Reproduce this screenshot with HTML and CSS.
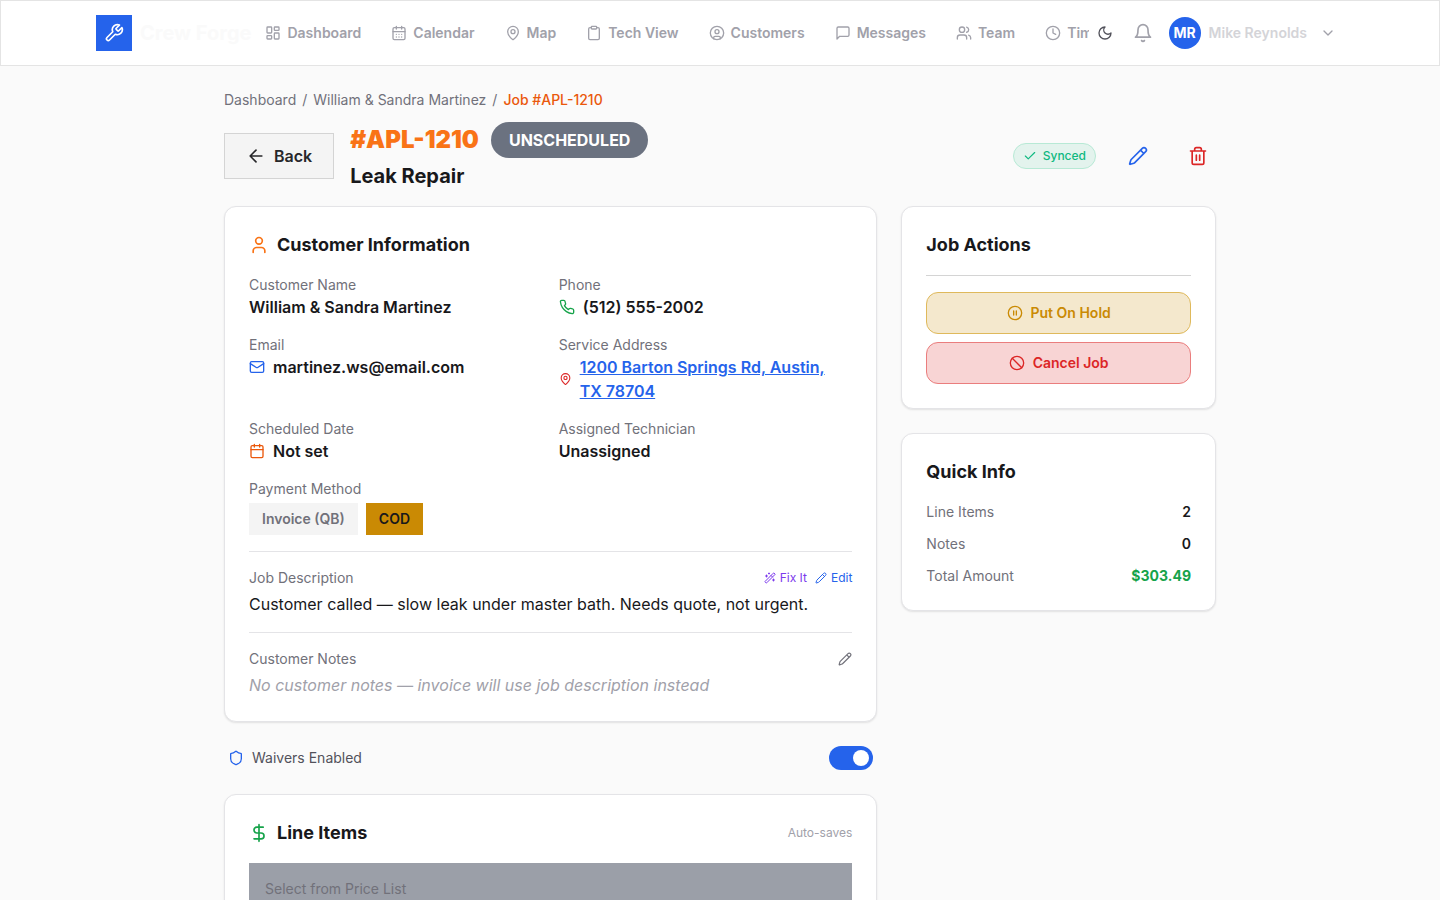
FILE: index.html
```html
<!DOCTYPE html>
<html lang="en">
<head>
  <meta charset="UTF-8" />
  <meta name="viewport" content="width=device-width, initial-scale=1.0" />
  <title>Job #APL-1210 - Crew Forge</title>
  <link rel="stylesheet" href="styles.css">
</head>
<body>
  <header class="topbar">
    <div class="topbar-inner">
      <a class="brand" href="#">
        <span class="brand-logo">
          <svg class="icon icon-md" viewBox="0 0 24 24"><path d="M14.7 6.3a1 1 0 0 0 0 1.4l1.6 1.6a1 1 0 0 0 1.4 0l3.77-3.77a6 6 0 0 1-7.94 7.94l-6.91 6.91a2.12 2.12 0 0 1-3-3l6.91-6.91a6 6 0 0 1 7.94-7.94l-3.76 3.76z"/></svg>
        </span>
        <span class="brand-name">Crew Forge</span>
      </a>
      <nav class="nav">
        <a href="#"><svg class="icon" viewBox="0 0 24 24"><rect x="3" y="3" width="7" height="9" rx="1"/><rect x="14" y="3" width="7" height="5" rx="1"/><rect x="14" y="12" width="7" height="9" rx="1"/><rect x="3" y="16" width="7" height="5" rx="1"/></svg>Dashboard</a>
        <a href="#"><svg class="icon" viewBox="0 0 24 24"><path d="M8 2v4M16 2v4M3 10h18"/><rect x="3" y="4" width="18" height="18" rx="2"/><path d="M8 14h.01M12 14h.01M16 14h.01M8 18h.01M12 18h.01M16 18h.01"/></svg>Calendar</a>
        <a href="#"><svg class="icon" viewBox="0 0 24 24"><path d="M20 10c0 4.993-5.539 10.193-7.399 11.799a1 1 0 0 1-1.202 0C9.539 20.193 4 14.993 4 10a8 8 0 0 1 16 0"/><circle cx="12" cy="10" r="3"/></svg>Map</a>
        <a href="#"><svg class="icon" viewBox="0 0 24 24"><rect x="8" y="2" width="8" height="4" rx="1"/><path d="M16 4h2a2 2 0 0 1 2 2v14a2 2 0 0 1-2 2H6a2 2 0 0 1-2-2V6a2 2 0 0 1 2-2h2"/></svg>Tech View</a>
        <a href="#"><svg class="icon" viewBox="0 0 24 24"><circle cx="12" cy="12" r="10"/><circle cx="12" cy="10" r="3"/><path d="M7 20.662V19a2 2 0 0 1 2-2h6a2 2 0 0 1 2 2v1.662"/></svg>Customers</a>
        <a href="#"><svg class="icon" viewBox="0 0 24 24"><path d="M21 15a2 2 0 0 1-2 2H7l-4 4V5a2 2 0 0 1 2-2h14a2 2 0 0 1 2 2z"/></svg>Messages</a>
        <a href="#"><svg class="icon" viewBox="0 0 24 24"><path d="M16 21v-2a4 4 0 0 0-4-4H6a4 4 0 0 0-4 4v2"/><circle cx="9" cy="7" r="4"/><path d="M22 21v-2a4 4 0 0 0-3-3.87M16 3.13a4 4 0 0 1 0 7.75"/></svg>Team</a>
        <a href="#"><svg class="icon" viewBox="0 0 24 24"><circle cx="12" cy="12" r="10"/><path d="M12 6v6l4 2"/></svg>Time</a>
      </nav>
      <div class="topbar-tools">
        <button class="theme-btn" aria-label="Toggle theme"><svg class="icon" viewBox="0 0 24 24"><path d="M12 3a6 6 0 0 0 9 9 9 9 0 1 1-9-9Z"/></svg></button>
        <button class="bell-btn" aria-label="Notifications"><svg class="icon icon-md" viewBox="0 0 24 24"><path d="M6 8a6 6 0 0 1 12 0c0 7 3 9 3 9H3s3-2 3-9"/><path d="M10.3 21a1.94 1.94 0 0 0 3.4 0"/></svg></button>
        <button class="user-btn">
          <span class="avatar">MR</span>
          <span>Mike Reynolds</span>
          <svg class="icon chevron" viewBox="0 0 24 24"><path d="m6 9 6 6 6-6"/></svg>
        </button>
      </div>
    </div>
  </header>

  <main class="container">
    <nav class="breadcrumb" aria-label="Breadcrumb">
      <a href="#">Dashboard</a>
      <span>/</span>
      <a href="#">William &amp; Sandra Martinez</a>
      <span>/</span>
      <span class="current">Job #APL-1210</span>
    </nav>

    <div class="job-header">
      <button class="back-btn"><svg class="icon icon-md" viewBox="0 0 24 24"><path d="m12 19-7-7 7-7M19 12H5"/></svg>Back</button>
      <div class="job-title">
        <div class="job-number">
          <h1>#APL-1210</h1>
          <span class="status">UNSCHEDULED</span>
        </div>
        <p>Leak Repair</p>
      </div>
      <div class="job-tools">
        <span class="synced"><svg class="icon icon-sm" viewBox="0 0 24 24"><path d="M20 6 9 17l-5-5"/></svg>Synced</span>
        <button class="icon-btn blue" aria-label="Edit job"><svg class="icon icon-md" viewBox="0 0 24 24"><path d="M21.174 6.812a1 1 0 0 0-3.986-3.987L3.842 16.174a2 2 0 0 0-.5.83l-1.321 4.352a.5.5 0 0 0 .623.622l4.353-1.32a2 2 0 0 0 .83-.497zM15 5l4 4"/></svg></button>
        <button class="icon-btn red" aria-label="Delete job"><svg class="icon icon-md" viewBox="0 0 24 24"><path d="M3 6h18M19 6v14c0 1-1 2-2 2H7c-1 0-2-1-2-2V6M8 6V4c0-1 1-2 2-2h4c1 0 2 1 2 2v2M10 11v6M14 11v6"/></svg></button>
      </div>
    </div>

    <div class="layout">
      <div class="column">
        <section class="card">
          <h2><svg class="icon icon-md orange" viewBox="0 0 24 24"><path d="M19 21v-2a4 4 0 0 0-4-4H9a4 4 0 0 0-4 4v2"/><circle cx="12" cy="7" r="4"/></svg>Customer Information</h2>

          <div class="info-grid">
            <div>
              <div class="label">Customer Name</div>
              <div class="value">William &amp; Sandra Martinez</div>
            </div>
            <div>
              <div class="label">Phone</div>
              <div class="value"><svg class="icon green" viewBox="0 0 24 24"><path d="M22 16.92v3a2 2 0 0 1-2.18 2 19.79 19.79 0 0 1-8.63-3.07 19.5 19.5 0 0 1-6-6 19.79 19.79 0 0 1-3.07-8.67A2 2 0 0 1 4.11 2h3a2 2 0 0 1 2 1.72 12.84 12.84 0 0 0 .7 2.81 2 2 0 0 1-.45 2.11L8.09 9.91a16 16 0 0 0 6 6l1.27-1.27a2 2 0 0 1 2.11-.45 12.84 12.84 0 0 0 2.81.7A2 2 0 0 1 22 16.92z"/></svg>(512) 555-2002</div>
            </div>
            <div>
              <div class="label">Email</div>
              <div class="value"><svg class="icon blue" viewBox="0 0 24 24"><rect x="2" y="4" width="20" height="16" rx="2"/><path d="m22 7-8.97 5.7a1.94 1.94 0 0 1-2.06 0L2 7"/></svg>martinez.ws@email.com</div>
            </div>
            <div>
              <div class="label">Service Address</div>
              <div class="value"><svg class="icon pin red" viewBox="0 0 24 24"><path d="M20 10c0 4.993-5.539 10.193-7.399 11.799a1 1 0 0 1-1.202 0C9.539 20.193 4 14.993 4 10a8 8 0 0 1 16 0"/><circle cx="12" cy="10" r="3"/></svg><a href="#">1200 Barton Springs Rd, Austin, TX 78704</a></div>
            </div>
            <div>
              <div class="label">Scheduled Date</div>
              <div class="value"><svg class="icon dark-orange" viewBox="0 0 24 24"><path d="M8 2v4M16 2v4M3 10h18"/><rect x="3" y="4" width="18" height="18" rx="2"/></svg>Not set</div>
            </div>
            <div>
              <div class="label">Assigned Technician</div>
              <div class="value">Unassigned</div>
            </div>
            <div>
              <div class="label">Payment Method</div>
              <div class="pay-options">
                <button>Invoice (QB)</button>
                <button class="active">COD</button>
              </div>
            </div>
          </div>

          <div class="block">
            <div class="block-head">
              <span class="label">Job Description</span>
              <div class="links">
                <button class="purple"><svg class="icon icon-xs" viewBox="0 0 24 24"><path d="m21.64 3.64-1.28-1.28a1.21 1.21 0 0 0-1.72 0L2.36 18.64a1.21 1.21 0 0 0 0 1.72l1.28 1.28a1.2 1.2 0 0 0 1.72 0L21.64 5.36a1.2 1.2 0 0 0 0-1.72M14 7l3 3M5 6v4M19 14v4M10 2v2M7 8H3M21 16h-4M11 3H9"/></svg>Fix It</button>
                <button class="blue"><svg class="icon icon-xs" viewBox="0 0 24 24"><path d="M21.174 6.812a1 1 0 0 0-3.986-3.987L3.842 16.174a2 2 0 0 0-.5.83l-1.321 4.352a.5.5 0 0 0 .623.622l4.353-1.32a2 2 0 0 0 .83-.497zM15 5l4 4"/></svg>Edit</button>
              </div>
            </div>
            <p>Customer called — slow leak under master bath. Needs quote, not urgent.</p>
          </div>

          <div class="block">
            <div class="block-head">
              <span class="label">Customer Notes</span>
              <div class="links">
                <button class="gray" aria-label="Edit customer notes"><svg class="icon icon-sm" viewBox="0 0 24 24"><path d="M21.174 6.812a1 1 0 0 0-3.986-3.987L3.842 16.174a2 2 0 0 0-.5.83l-1.321 4.352a.5.5 0 0 0 .623.622l4.353-1.32a2 2 0 0 0 .83-.497zM15 5l4 4"/></svg></button>
              </div>
            </div>
            <p class="empty">No customer notes — invoice will use job description instead</p>
          </div>
        </section>

        <div class="waivers">
          <svg class="icon blue" viewBox="0 0 24 24"><path d="M20 13c0 5-3.5 7.5-7.66 8.95a1 1 0 0 1-.67-.01C7.5 20.5 4 18 4 13V6a1 1 0 0 1 1-1c2 0 4.5-1.2 6.24-2.72a1.17 1.17 0 0 1 1.52 0C14.51 3.81 17 5 19 5a1 1 0 0 1 1 1z"/></svg>
          <label for="waivers">Waivers Enabled</label>
          <input type="checkbox" id="waivers" class="switch" checked>
        </div>

        <section class="card">
          <div class="card-head">
            <h2><svg class="icon icon-md green" viewBox="0 0 24 24"><path d="M12 2v20M17 5H9.5a3.5 3.5 0 0 0 0 7h5a3.5 3.5 0 0 1 0 7H6"/></svg>Line Items</h2>
            <span class="hint">Auto-saves</span>
          </div>
          <div class="price-list">
            <label class="label" for="priceList">Select from Price List</label>
            <select id="priceList"></select>
          </div>
        </section>
      </div>

      <aside class="column">
        <section class="card">
          <h2>Job Actions</h2>
          <div class="actions">
            <button class="hold"><svg class="icon" viewBox="0 0 24 24"><circle cx="12" cy="12" r="10"/><path d="M10 15V9M14 15V9"/></svg>Put On Hold</button>
            <button class="cancel"><svg class="icon" viewBox="0 0 24 24"><circle cx="12" cy="12" r="10"/><path d="m4.9 4.9 14.2 14.2"/></svg>Cancel Job</button>
          </div>
        </section>

        <section class="card">
          <h2>Quick Info</h2>
          <dl class="quick-info">
            <div><dt>Line Items</dt><dd>2</dd></div>
            <div><dt>Notes</dt><dd>0</dd></div>
            <div><dt>Total Amount</dt><dd class="total">$303.49</dd></div>
          </dl>
        </section>
      </aside>
    </div>
  </main>
</body>
</html>
```
FILE: styles.css
```css
* {
  box-sizing: border-box;
}
body {
  margin: 0;
  font-family: Inter, "Liberation Sans", sans-serif;
  font-size: 16px;
  line-height: 24px;
  color: #18181b;
  background: #fafafa;
}
h1, h2, p, dl, dd {
  margin: 0;
}
a {
  color: inherit;
  text-decoration: none;
}
button {
  font: inherit;
  color: inherit;
  background: none;
  border: none;
  padding: 0;
  cursor: pointer;
}

/* icons */
.icon {
  width: 16px;
  height: 16px;
  flex-shrink: 0;
  fill: none;
  stroke: currentColor;
  stroke-width: 2;
  stroke-linecap: round;
  stroke-linejoin: round;
}
.icon-md {
  width: 20px;
  height: 20px;
}
.icon-sm {
  width: 14px;
  height: 14px;
}
.icon-xs {
  width: 12px;
  height: 12px;
}
.blue { color: #2563eb; }
.red { color: #dc2626; }
.green { color: #16a34a; }
.orange { color: #f97316; }
.dark-orange { color: #ea580c; }
.purple { color: #7c3aed; }
.gray { color: #71717a; }

/* top bar */
.topbar {
  background: #fff;
  border: 1px solid #e4e4e4;
}
.topbar-inner {
  display: flex;
  align-items: center;
  height: 64px;
  max-width: 1280px;
  margin: 0 auto;
  padding: 0 16px;
}
.brand {
  display: flex;
  align-items: center;
  gap: 8px;
  margin-right: 14px;
  font-size: 20px;
  font-weight: 700;
  color: #fafafa;
  white-space: nowrap;
}
.brand-logo {
  display: flex;
  align-items: center;
  justify-content: center;
  width: 36px;
  height: 36px;
  color: #fff;
  background: #2563eb;
}
.nav {
  display: flex;
  flex: 1;
  gap: 30px;
  min-width: 0;
  overflow: hidden;
}
.nav a {
  display: flex;
  align-items: center;
  gap: 6px;
  font-size: 14px;
  font-weight: 600;
  line-height: 20px;
  color: #a1a1aa;
  white-space: nowrap;
}
.topbar-tools {
  display: flex;
  align-items: center;
}
.theme-btn,
.bell-btn {
  display: flex;
  align-items: center;
  justify-content: center;
  height: 36px;
}
.theme-btn {
  width: 32px;
  margin-right: 4px;
  color: #52525b;
}
.bell-btn {
  width: 36px;
  color: #a1a1aa;
}
.user-btn {
  display: flex;
  align-items: center;
  gap: 8px;
  padding: 0 8px;
  font-size: 14px;
  font-weight: 600;
  color: #d4d4d8;
  white-space: nowrap;
}
.avatar {
  display: flex;
  align-items: center;
  justify-content: center;
  width: 32px;
  height: 32px;
  border-radius: 50%;
  font-weight: 700;
  color: #fff;
  background: #2563eb;
}
.chevron {
  margin-left: 5px;
  color: #a1a1aa;
}

/* page */
.container {
  max-width: 1024px;
  margin: 0 auto;
  padding: 24px 16px;
}
.breadcrumb {
  display: flex;
  gap: 6px;
  margin-bottom: 12px;
  font-size: 14px;
  line-height: 20px;
  color: #71717a;
}
.breadcrumb .current {
  font-weight: 500;
  color: #ea580c;
}
.job-header {
  display: flex;
  align-items: center;
  gap: 16px;
  margin-bottom: 16px;
}
.back-btn {
  display: flex;
  align-items: center;
  gap: 8px;
  height: 46px;
  padding: 0 21px;
  border: 1px solid #d4d4d4;
  font-weight: 600;
  color: #27272a;
  background: #f4f4f4;
}
.job-number {
  display: flex;
  align-items: center;
  gap: 12px;
  margin-bottom: 4px;
}
.job-number h1 {
  font-size: 24px;
  font-weight: 900;
  line-height: 32px;
  color: #f97316;
}
.status {
  padding: 6px 18px;
  border-radius: 18px;
  font-weight: 700;
  color: #fff;
  background: #6b7280;
}
.job-title p {
  font-size: 20px;
  font-weight: 700;
  line-height: 28px;
}
.job-tools {
  display: flex;
  align-items: center;
  gap: 24px;
  margin-left: auto;
}
.synced {
  display: flex;
  align-items: center;
  gap: 6px;
  padding: 4px 9px;
  border: 1px solid #b7e9d5;
  border-radius: 13px;
  font-size: 12px;
  font-weight: 500;
  line-height: 16px;
  color: #10b981;
  background: #e3f3ed;
}
.icon-btn {
  display: flex;
  padding: 8px;
}

.layout {
  display: grid;
  grid-template-columns: repeat(3, minmax(0, 1fr));
  gap: 24px;
  align-items: start;
}
.layout > :first-child {
  grid-column: span 2;
}
.column {
  display: flex;
  flex-direction: column;
  gap: 24px;
}
.card {
  padding: 24px;
  border: 1px solid #e4e4e7;
  border-radius: 12px;
  background: #fff;
  box-shadow: 0 1px 2px rgba(0, 0, 0, 0.1);
}
.card h2 {
  display: flex;
  align-items: center;
  gap: 8px;
  font-size: 18px;
  font-weight: 700;
  line-height: 28px;
}
.label {
  display: block;
  font-size: 14px;
  line-height: 20px;
  color: #71717a;
}

/* customer information */
.info-grid {
  display: grid;
  grid-template-columns: 1fr 1fr;
  gap: 16px;
  margin: 16px 0;
}
.value {
  display: flex;
  align-items: center;
  gap: 8px;
  font-weight: 600;
}
.value a {
  max-width: 264px;
  color: #2563eb;
  text-decoration: underline;
}
.pin {
  width: 13px;
}
.pay-options {
  display: flex;
  gap: 8px;
  margin-top: 4px;
}
.pay-options button {
  padding: 6px 13px;
  font-size: 14px;
  font-weight: 600;
  line-height: 20px;
  color: #71717a;
  background: #f4f4f4;
}
.pay-options .active {
  color: #18181b;
  background: #ca8a04;
}
.block {
  padding-top: 16px;
  border-top: 1px solid #e4e4e7;
}
.block + .block {
  margin-top: 16px;
}
.block-head {
  display: flex;
  align-items: center;
  justify-content: space-between;
  margin-bottom: 4px;
}
.links {
  display: flex;
  gap: 8px;
}
.links button {
  display: flex;
  align-items: center;
  gap: 4px;
  font-size: 12px;
  line-height: 16px;
}
.empty {
  font-style: italic;
  color: #a1a1aa;
}

/* waivers */
.waivers {
  display: flex;
  align-items: center;
  gap: 8px;
  padding: 0 4px;
  font-size: 14px;
  color: #52525b;
}
.switch {
  appearance: none;
  width: 44px;
  height: 24px;
  margin: 0 0 0 auto;
  padding: 4px;
  border-radius: 12px;
  background: #d4d4d8;
  cursor: pointer;
}
.switch::before {
  content: "";
  display: block;
  width: 16px;
  height: 16px;
  border-radius: 50%;
  background: #fff;
}
.switch:checked {
  background: #2563eb;
}
.switch:checked::before {
  margin-left: auto;
}

/* line items */
.card-head {
  display: flex;
  align-items: center;
  justify-content: space-between;
  margin-bottom: 16px;
}
.hint {
  font-size: 12px;
  line-height: 16px;
  color: #a1a1aa;
}
.price-list {
  padding: 16px;
  background: #9b9fa8;
}
.price-list select {
  display: block;
  width: 100%;
  height: 40px;
  margin-top: 8px;
}

/* sidebar */
.actions {
  display: flex;
  flex-direction: column;
  gap: 8px;
  margin-top: 16px;
  padding-top: 16px;
  border-top: 1px solid #d4d4d4;
}
.actions button {
  display: flex;
  align-items: center;
  justify-content: center;
  gap: 8px;
  padding: 10px 16px;
  border: 1px solid;
  border-radius: 12px;
  font-size: 14px;
  font-weight: 600;
  line-height: 20px;
}
.actions .hold {
  border-color: #dfb95b;
  color: #ca8a04;
  background: #f4e8cd;
}
.actions .cancel {
  border-color: #ea7d7d;
  color: #dc2626;
  background: #f8d4d4;
}
.quick-info {
  display: flex;
  flex-direction: column;
  gap: 12px;
  margin-top: 16px;
  font-size: 14px;
  line-height: 20px;
}
.quick-info div {
  display: flex;
  justify-content: space-between;
}
.quick-info dt {
  color: #71717a;
}
.quick-info dd {
  font-weight: 600;
}
.quick-info .total {
  font-weight: 700;
  color: #16a34a;
}
```
